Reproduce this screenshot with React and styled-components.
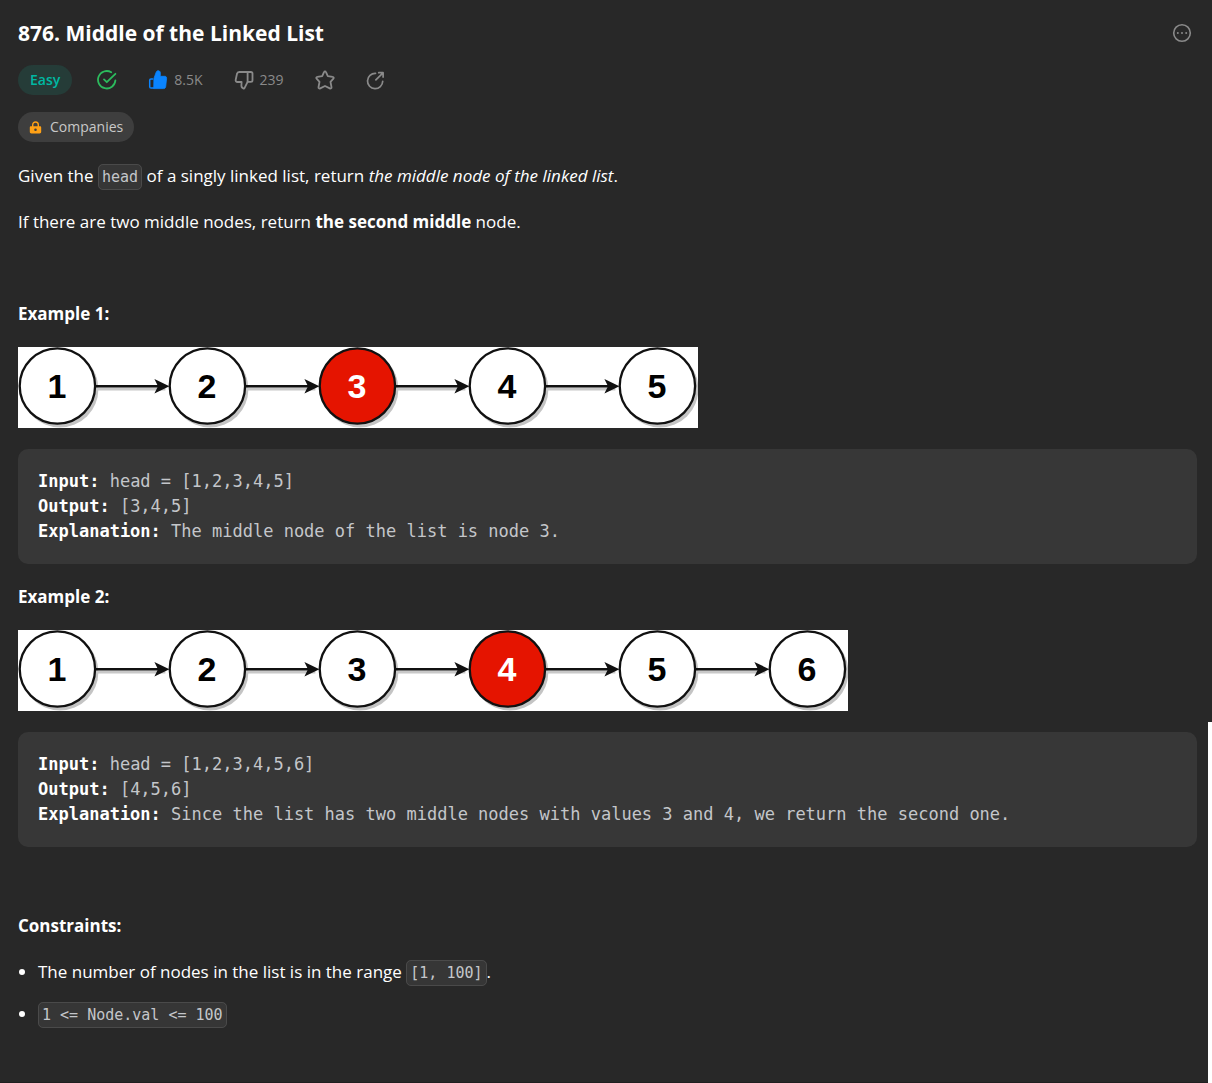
import React from "react";
import styled, { createGlobalStyle } from "styled-components";

const GlobalStyle = createGlobalStyle`
  *, *::before, *::after { box-sizing: border-box; }
  body {
    margin: 0;
    background: #282828;
    color: #fff;
    font-family: "Open Sans", "Noto Sans", sans-serif;
    font-size: 17px;
    line-height: 26px;
  }
`;

const MONO = `"DejaVu Sans Mono", "Liberation Mono", monospace`;

const Page = styled.div`
  display: grid;
  grid-template-columns: minmax(0, 1fr) 4px;
  min-height: 100vh;
`;

const Main = styled.main`
  padding: 18px 11px 20px 18px;
  border-bottom: 1px solid #1f1f1f;
`;

const Rail = styled.div`
  display: flex;
  flex-direction: column;
  justify-content: flex-end;
`;

const Thumb = styled.div`
  flex: 0 0 calc(100% / 3);
  background: #fff;
`;

const Header = styled.header`
  display: flex;
  flex-direction: column;
  align-items: flex-start;
  gap: 17px;
  margin-bottom: 21px;
`;

const TitleRow = styled.div`
  display: flex;
  align-self: stretch;
  align-items: center;
  justify-content: space-between;
  height: 30px;
  padding-right: 5px;
`;

const Title = styled.h1`
  margin: 0;
  font-size: 21px;
  line-height: 30px;
  font-weight: 700;
`;

const Meta = styled.div`
  display: flex;
  align-items: center;
  gap: 31px;
`;

const Status = styled.div`
  display: flex;
  align-items: center;
  gap: 25px;
  color: #2cbb5d;
`;

const Difficulty = styled.span`
  padding: 0 12px;
  border-radius: 15px;
  background: #253c38;
  color: #00b8a3;
  font-size: 14px;
  font-weight: 600;
  line-height: 30px;
`;

const IconButton = styled.button`
  display: inline-flex;
  align-items: center;
  gap: 6px;
  padding: 0;
  border: 0;
  background: none;
  color: ${(p) => p.$color || "#8a8a8a"};
  font: inherit;
  font-size: 14px;
  line-height: 20px;
  cursor: pointer;
`;

const Count = styled.span`
  color: #8a8a8a;
`;

const Companies = styled.button`
  display: inline-flex;
  align-items: center;
  gap: 8px;
  height: 30px;
  padding: 0 11px;
  border: 0;
  border-radius: 15px;
  background: #3e3e3e;
  color: #c8c8c8;
  font: inherit;
  font-size: 14px;
  cursor: pointer;
`;

const Paragraph = styled.p`
  margin: 0 0 20px;
  min-height: 26px;
`;

const Code = styled.code`
  padding: 3px;
  border: 1px solid #4a4a4a;
  border-radius: 5px;
  background: #363636;
  color: #c4c6ca;
  font-family: ${MONO};
  font-size: 15px;
  line-height: 20px;
  white-space: nowrap;
`;

const Figure = styled.figure`
  margin: 0 0 20px;
  padding-bottom: 1px;
  svg { display: block; max-width: 100%; }
`;

const Example = styled.pre`
  margin: 0 0 20px;
  padding: 20px;
  border-radius: 10px;
  background: #373737;
  color: #c4c6ca;
  font-family: ${MONO};
  font-size: 17px;
  line-height: 25px;
  white-space: pre-wrap;
  strong { color: #fff; }
`;

const List = styled.ul`
  display: flex;
  flex-direction: column;
  gap: 16px;
  margin: 0;
  padding-left: 20px;
`;

const Glyph = styled.svg`
  display: block;
  flex: none;
  fill: none;
  stroke: currentColor;
  stroke-linecap: round;
  stroke-linejoin: round;
`;

const Icon = ({ size = 20, children, label }) => (
  <Glyph width={size} height={size} viewBox="0 0 20 20" strokeWidth="1.8" role="img" aria-label={label}>
    {children}
  </Glyph>
);

const MoreIcon = () => (
  <Icon label="More">
    <circle cx="10" cy="10" r="8.3" strokeWidth="1.6" />
    <g fill="currentColor" stroke="none">
      <circle cx="5.8" cy="10" r="1" /><circle cx="10" cy="10" r="1" /><circle cx="14.2" cy="10" r="1" />
    </g>
  </Icon>
);

const SolvedIcon = () => (
  <Icon label="Solved">
    <path d="M14.2 2.3A8.7 8.7 0 1 0 18.4 10.3" />
    <path d="M7 9.4l2.8 2.8L18.4 3.8" />
  </Icon>
);

const LikeIcon = () => (
  <Icon label="Like">
    <path d="M6 8.2L8.2 2.2C8.6 1.1 9.5.6 10.4.7c1.5.2 2.1 1.4 2 2.9L12.2 6.3h4.6c1.2 0 1.9.9 1.8 2l-.9 8.2c-.1 1.3-.9 2.1-2.1 2.1H6z" fill="currentColor" strokeWidth="0.8" />
    <path d="M4.6 8.9H3c-.7 0-1.3.6-1.3 1.3v6.5c0 .7.6 1.3 1.3 1.3h2.6" strokeWidth="1.5" />
  </Icon>
);

const DislikeIcon = () => (
  <Icon label="Dislike">
    <path d="M13.6 2H5.2C4 2 3.2 2.7 3 3.8L1.7 9.7c-.3 1.3.5 2.3 1.8 2.3h4.1l-.2 3.6c0 1.6.7 2.6 2.1 2.9.5.1.9-.1 1.1-.6l3-6z" />
    <path d="M13.6 2h3.3c.9 0 1.6.7 1.6 1.6v6.7c0 .9-.7 1.6-1.6 1.6h-3.3" />
  </Icon>
);

const StarIcon = () => (
  <Icon label="Favorite">
    <path d="M9 2.1c.4-1 1.600-1 2 0l1.800 4.100 4.900.6c1 .1 1.400 1.200.7 1.900l-2.900 3.200 1 5.300c.2 1-.8 1.700-1.700 1.200L10 16l-4.800 2.400c-.9.5-1.900-.2-1.700-1.200l1-5.300L1.600 8.700c-.7-.7-.3-1.800.7-1.900l4.900-.6z" />
  </Icon>
);

const ShareIcon = () => (
  <Icon label="Share" size={19}>
    <path d="M10 2.6A8 8 0 1 0 17.6 10.8" />
    <path d="M13.4 1.8h4.6v4.6M17.6 2.2L10.4 9.4" />
  </Icon>
);

const LockIcon = () => (
  <svg width="13" height="13" viewBox="0 0 13 13" aria-hidden="true">
    <path d="M3.7 6V3.8a2.8 2.8 0 0 1 5.6 0V6" fill="none" stroke="#ffa116" strokeWidth="1.4" />
    <path fillRule="evenodd" fill="#ffa116" d="M2 5.3h9c.7 0 1.2.5 1.2 1.2v4.3c0 .9-.7 1.6-1.6 1.6H2.400c-.9 0-1.600-.7-1.600-1.600V6.500c0-.7.5-1.200 1.200-1.200zM6.500 7.500a1.300 1.300 0 1 0 0 2.600 1.300 1.300 0 0 0 0-2.600z" />
  </svg>
);

function LinkedList({ count, middle }) {
  const width = count * 150 - 70;
  const nodes = Array.from({ length: count }, (_, i) => i + 1);
  return (
    <svg width={width} height="81" viewBox={`0 0 ${width} 81`} role="img"
      aria-label={`Linked list of ${count} nodes, node ${middle} highlighted`}>
      <rect width={width} height="81" fill="#fff" />
      {nodes.map((n) => {
        const x = 39.4 + (n - 1) * 150;
        return (
          <g key={n}>
            <circle cx={x + 2.5} cy="42" r="38.5" fill="#c4c4c4" />
            {n < count && (
              <>
                <path d={`M${x + 38} 42H${x + 108}`} stroke="#c8c8c8" strokeWidth="3" />
                <path d={`M${x + 38} 39.2H${x + 102}`} stroke="#111" strokeWidth="2.4" />
                <path d={`M${x + 112} 39.2l-15 7.2 3.6-7.2-3.6-7.2z`} fill="#111" />
              </>
            )}
            <circle cx={x} cy="39" r="37.7" fill={n === middle ? "#e51400" : "#fff"} stroke="#111" strokeWidth="2.3" />
            <text x={x - 0.5} y="51" textAnchor="middle" fontFamily="'Liberation Sans', Arial, sans-serif"
              fontWeight="700" fontSize="34" fill={n === middle ? "#fff" : "#000"}>{n}</text>
          </g>
        );
      })}
    </svg>
  );
}

export default function App() {
  return (
    <>
      <GlobalStyle />
      <Page>
        <Main>
          <Header>
            <TitleRow>
              <Title>876. Middle of the Linked List</Title>
              <IconButton type="button"><MoreIcon /></IconButton>
            </TitleRow>
            <Meta>
              <Status>
                <Difficulty>Easy</Difficulty>
                <SolvedIcon />
              </Status>
              <IconButton type="button" $color="#0a84ff"><LikeIcon /><Count>8.5K</Count></IconButton>
              <IconButton type="button"><DislikeIcon /><Count>239</Count></IconButton>
              <IconButton type="button"><StarIcon /></IconButton>
              <IconButton type="button"><ShareIcon /></IconButton>
            </Meta>
            <Companies type="button"><LockIcon />Companies</Companies>
          </Header>

          <Paragraph>
            Given the <Code>head</Code> of a singly linked list, return <em>the middle node of the linked list</em>.
          </Paragraph>
          <Paragraph>
            If there are two middle nodes, return <strong>the second middle</strong> node.
          </Paragraph>
          <Paragraph />

          <Paragraph><strong>Example 1:</strong></Paragraph>
          <Figure><LinkedList count={5} middle={3} /></Figure>
          <Example>
            <strong>Input:</strong>{" head = [1,2,3,4,5]\n"}
            <strong>Output:</strong>{" [3,4,5]\n"}
            <strong>Explanation:</strong>{" The middle node of the list is node 3."}
          </Example>

          <Paragraph><strong>Example 2:</strong></Paragraph>
          <Figure><LinkedList count={6} middle={4} /></Figure>
          <Example>
            <strong>Input:</strong>{" head = [1,2,3,4,5,6]\n"}
            <strong>Output:</strong>{" [4,5,6]\n"}
            <strong>Explanation:</strong>{" Since the list has two middle nodes with values 3 and 4, we return the second one."}
          </Example>
          <Paragraph />

          <Paragraph><strong>Constraints:</strong></Paragraph>
          <List>
            <li>The number of nodes in the list is in the range <Code>[1, 100]</Code>.</li>
            <li><Code>{"1 <= Node.val <= 100"}</Code></li>
          </List>
        </Main>
        <Rail><Thumb /></Rail>
      </Page>
    </>
  );
}
